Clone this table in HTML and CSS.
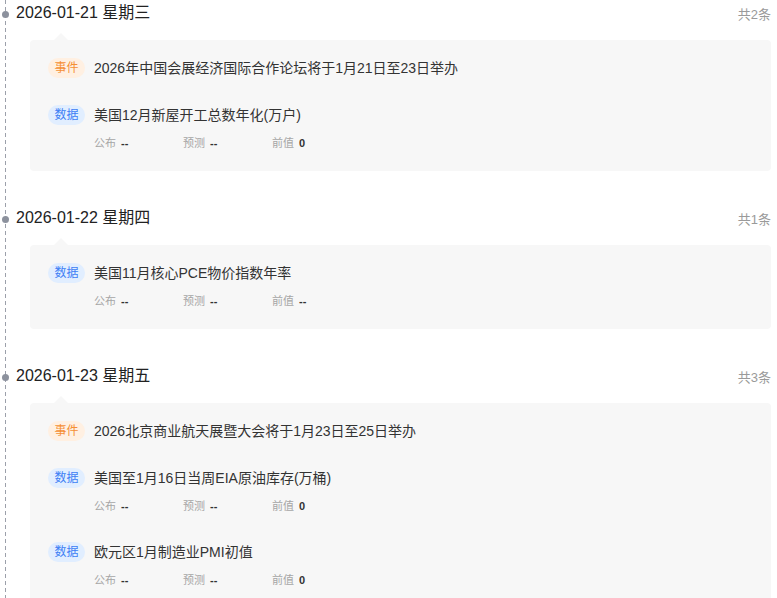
FILE: index.html
```html
<!DOCTYPE html>
<html lang="zh-CN">
  <head>
    <meta charset="utf-8" />
    <meta name="viewport" content="width=device-width, initial-scale=1" />
    <title>财经日历</title>
    <link rel="stylesheet" href="styles.css">
  </head>
  <body>
    <div class="timeline">

      <!-- 2026-01-21 -->
      <section class="day">
        <div class="day__head">
          <h2 class="day__date">2026-01-21 星期三</h2>
          <span class="day__count">共2条</span>
        </div>
        <div class="day__card">
          <div class="item">
            <div class="item__row">
              <span class="tag tag--event">事件</span>
              <span class="item__title">2026年中国会展经济国际合作论坛将于1月21日至23日举办</span>
            </div>
          </div>
          <div class="item">
            <div class="item__row">
              <span class="tag tag--data">数据</span>
              <span class="item__title">美国12月新屋开工总数年化(万户)</span>
            </div>
            <div class="meta">
              <span class="meta__cell">公布 <b>--</b></span>
              <span class="meta__cell">预测 <b>--</b></span>
              <span class="meta__cell">前值 <b>0</b></span>
            </div>
          </div>
        </div>
      </section>

      <!-- 2026-01-22 -->
      <section class="day">
        <div class="day__head">
          <h2 class="day__date">2026-01-22 星期四</h2>
          <span class="day__count">共1条</span>
        </div>
        <div class="day__card">
          <div class="item">
            <div class="item__row">
              <span class="tag tag--data">数据</span>
              <span class="item__title">美国11月核心PCE物价指数年率</span>
            </div>
            <div class="meta">
              <span class="meta__cell">公布 <b>--</b></span>
              <span class="meta__cell">预测 <b>--</b></span>
              <span class="meta__cell">前值 <b>--</b></span>
            </div>
          </div>
        </div>
      </section>

      <!-- 2026-01-23 -->
      <section class="day">
        <div class="day__head">
          <h2 class="day__date">2026-01-23 星期五</h2>
          <span class="day__count">共3条</span>
        </div>
        <div class="day__card">
          <div class="item">
            <div class="item__row">
              <span class="tag tag--event">事件</span>
              <span class="item__title">2026北京商业航天展暨大会将于1月23日至25日举办</span>
            </div>
          </div>
          <div class="item">
            <div class="item__row">
              <span class="tag tag--data">数据</span>
              <span class="item__title">美国至1月16日当周EIA原油库存(万桶)</span>
            </div>
            <div class="meta">
              <span class="meta__cell">公布 <b>--</b></span>
              <span class="meta__cell">预测 <b>--</b></span>
              <span class="meta__cell">前值 <b>0</b></span>
            </div>
          </div>
          <div class="item">
            <div class="item__row">
              <span class="tag tag--data">数据</span>
              <span class="item__title">欧元区1月制造业PMI初值</span>
            </div>
            <div class="meta">
              <span class="meta__cell">公布 <b>--</b></span>
              <span class="meta__cell">预测 <b>--</b></span>
              <span class="meta__cell">前值 <b>0</b></span>
            </div>
          </div>
        </div>
      </section>

    </div>
  </body>
</html>
```

FILE: styles.css
```css
body {
  margin: 0;
  background: #ffffff;
  color: #333333;
  font-family: "Liberation Sans", "Noto Sans CJK SC", sans-serif;
}

/* dashed line down the left side */
.timeline {
  padding: 0 6px 40px 0;
  background-image: linear-gradient(#9ca0aa 4px, transparent 4px);
  background-size: 1px 7px;
  background-repeat: repeat-y;
  background-position: 5px 0;
}

.day {
  margin-bottom: 34px;
}

.day__head {
  display: flex;
  align-items: center;
  height: 26px;
  margin-bottom: 14px;
}

.day__date {
  display: flex;
  align-items: center;
  flex: 1;
  margin: 0;
  font-size: 16px;
  line-height: 20px;
  font-weight: normal;
  color: #222222;
}

.day__date::before {
  content: "";
  width: 7px;
  height: 7px;
  border-radius: 50%;
  background: #8c919d;
  margin: 2px 7px 0 2px;
}

.day__count {
  font-size: 13px;
  color: #9a9a9a;
}

.day__card {
  position: relative;
  margin-left: 30px;
  padding: 18px 18px 19px;
  background: #f7f7f7;
  border-radius: 4px;
}

/* little arrow on top of the card */
.day__card::before {
  content: "";
  position: absolute;
  top: -7px;
  left: 24px;
  border-left: 7px solid transparent;
  border-right: 7px solid transparent;
  border-bottom: 7px solid #f7f7f7;
}

.item + .item {
  margin-top: 27px;
}

.item__row {
  display: flex;
  align-items: center;
  height: 20px;
}

.tag {
  width: 37px;
  height: 20px;
  line-height: 20px;
  border-radius: 10px;
  text-align: center;
  font-size: 12px;
  margin-right: 9px;
  flex-shrink: 0;
}

.tag--event {
  background: #fff0e2;
  color: #f58f35;
}

.tag--data {
  background: #e1eeff;
  color: #3d7ef5;
}

.item__title {
  font-size: 14px;
  line-height: 18px;
  color: #333333;
}

.meta {
  display: flex;
  margin: 10px 0 0 46px;
  height: 17px;
  line-height: 17px;
  font-size: 11px;
  color: #a6a6a6;
}

.meta__cell {
  width: 89px;
}

.meta__cell b {
  margin-left: 2px;
  color: #333333;
  font-weight: 600;
}
```
